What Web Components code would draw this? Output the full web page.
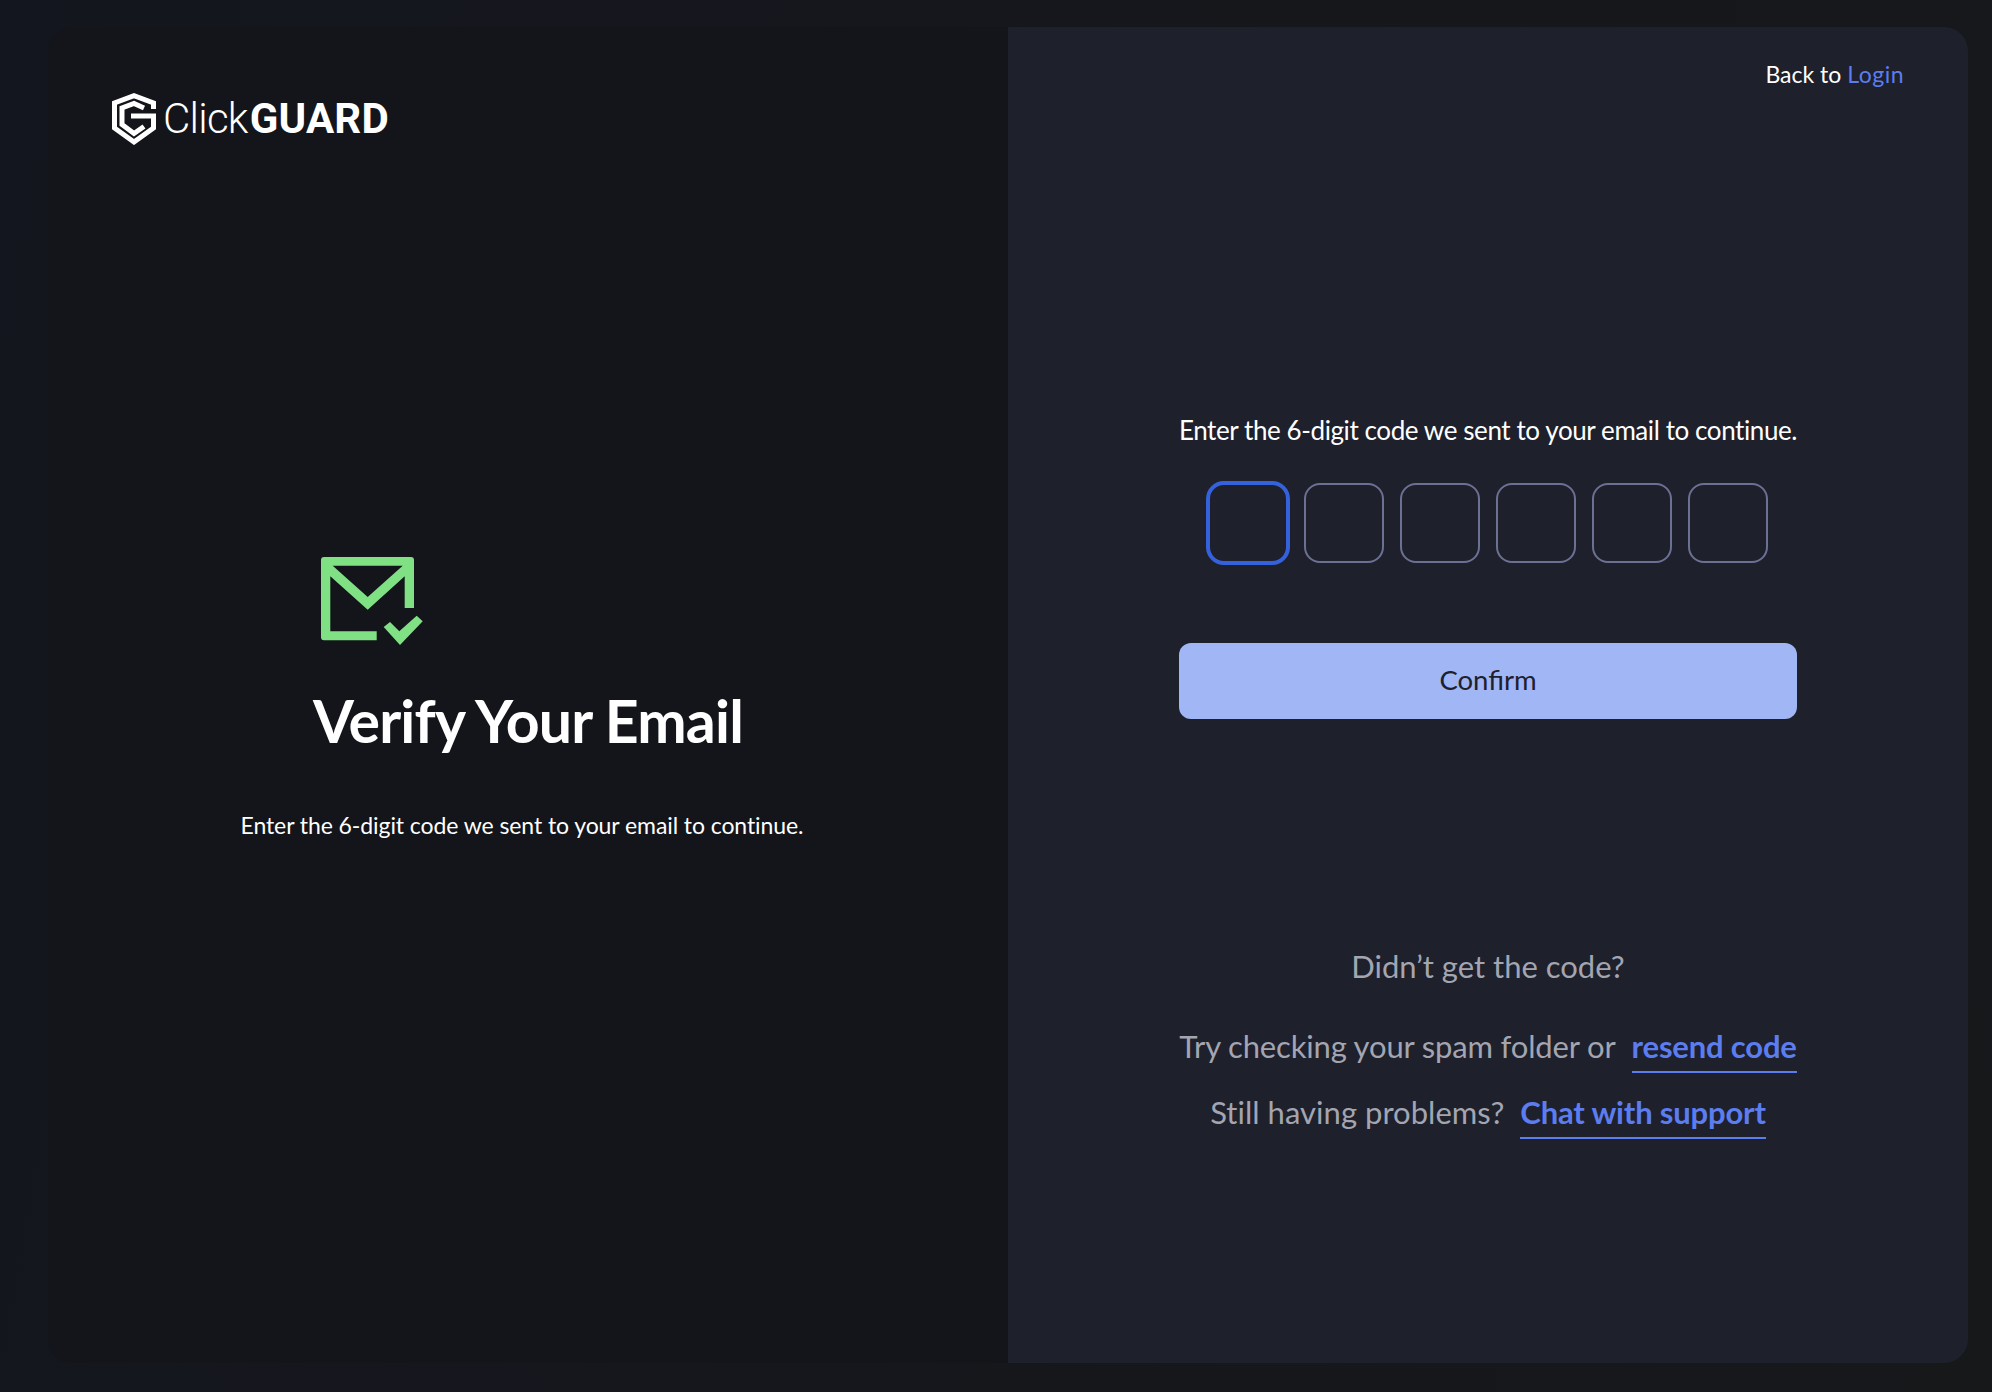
<!DOCTYPE html>
<html lang="en"><head><meta charset="utf-8"><title>Verify Your Email</title>
<style>
html,body{margin:0;height:100%}
body{background:linear-gradient(100deg,#14161f 0%,#16171c 50%,#17181a 100%);font-family:Lato,"Open Sans",sans-serif;}
</style></head><body>
<verify-page>
  <brand-panel></brand-panel>
  <code-panel></code-panel>
</verify-page>
<script>
function def(name,html){customElements.define(name,class extends HTMLElement{constructor(){super();this.attachShadow({mode:'open'}).innerHTML=html;}});}
def('verify-page',`<style>
:host{display:block;box-sizing:border-box;height:1392px;padding:27px 24px 29px 48px}
.card{display:grid;grid-template-columns:960px 960px;height:100%;border-radius:24px;overflow:hidden}
</style><div class="card"><slot></slot></div>`);
def('cg-logo',`<style>
:host{display:flex;align-items:center;gap:7px;color:#fff;height:52px}
svg{width:44px;height:52px;flex:none}
.w{font:300 42px/52px Roboto,sans-serif;white-space:nowrap}
i{font-style:normal;letter-spacing:-.75px}
b{font-weight:700;margin-left:2px;letter-spacing:.2px}
</style><svg viewBox="0 0 44 52" aria-hidden="true" fill="none" stroke="#fff" stroke-width="5" stroke-linejoin="miter">
<path d="M41.500 16V10L22 2.700 2.500 10V35L22 49 41.500 35V23H19"/>
<path d="M32 15 22 10.500 10 15V31.500L22 40.500 32 33.500"/>
</svg><span class="w"><i>Click</i><b>GUARD</b></span>`);
def('mail-check',`<style>:host{display:block;width:102px;height:88px}svg{display:block}</style>
<svg width="102" height="88" viewBox="0 0 102 88" aria-hidden="true" fill="#7fe184">
<path fill-rule="evenodd" d="M3 0H90a3 3 0 0 1 3 3V51H83.700V19.300L46.700 52.700 9.300 19.300V74.300H55.700V83.300H3a3 3 0 0 1-3-3V3a3 3 0 0 1 3-3ZM11.700 8.700 46.700 40 81.700 8.700Z"/>
<path d="M62.700 70 69 65 78.300 74.300 95.700 58.700 101.700 64.300 79 88Z"/>
</svg>`);
def('brand-panel',`<style>
:host{display:flex;flex-direction:column;background:#13151a;color:#fff;padding:66px 0 0 64px;box-sizing:border-box;min-width:0}
.c{display:flex;flex-direction:column;margin-top:412px;margin-left:-64px;width:960px;align-items:center}
mail-check{align-self:flex-start;margin-left:273px}
h1{margin:40px 0 0;font:700 59px/72px Lato,sans-serif;letter-spacing:-.8px}
p{margin:52px 0 0;font:400 23px/32px Lato,sans-serif;letter-spacing:-.08px;margin-right:12px}
</style><cg-logo></cg-logo><div class="c"><mail-check></mail-check><h1>Verify Your Email</h1><p>Enter the 6-digit code we sent to your email to continue.</p></div>`);
def('code-box',`<style>
:host{display:block;box-sizing:border-box;width:80px;height:80px;border:2px solid #6c7093;border-radius:16px}
:host([active]){width:84px;height:84px;margin:-2px -2px;border:4px solid #3562dc;border-radius:18px}
</style>`);
def('text-link',`<style>
:host{display:inline-block;color:#5c7df0;font-weight:700;letter-spacing:-.18px;border-bottom:2px solid #5c7df0;padding-bottom:7px;line-height:36px}
</style><slot></slot>`);
def('code-panel',`<style>
:host{display:flex;flex-direction:column;align-items:center;background:#1e202c;color:#fff;position:relative;box-sizing:border-box;padding-top:384px}
.top{position:absolute;top:29px;right:64px;font:400 23px/36px Lato,sans-serif}
.top a{color:#5c7df0;text-decoration:none;letter-spacing:.5px}
.lead{font:400 26px/38px Lato,sans-serif;letter-spacing:-.41px;white-space:nowrap}
.boxes{display:flex;gap:16px;margin-top:34px;align-items:center}
button{display:block;width:618px;height:76px;margin-top:80px;padding:0 0 2px;background:#a1b6f5;color:#1e202c;border:0;border-radius:12px;font:400 27.500px/36px Lato,sans-serif}
.help{margin-top:227px;color:#a3a5b1;font:400 31px/40px Lato,sans-serif;text-align:center;display:flex;flex-direction:column;align-items:center}
.l1{margin-bottom:40px}
.row{display:flex;gap:16px;align-items:baseline;height:66px;white-space:nowrap}
.r1 span{letter-spacing:-.16px}
.r2 span{letter-spacing:.03px}
</style>
<div class="top">Back to <a href="#">Login</a></div>
<div class="lead">Enter the 6-digit code we sent to your email to continue.</div>
<div class="boxes"><code-box active></code-box><code-box></code-box><code-box></code-box><code-box></code-box><code-box></code-box><code-box></code-box></div>
<button>Confirm</button>
<div class="help"><div class="l1">Didn’t get the code?</div>
<div class="row r1"><span>Try checking your spam folder or</span><text-link>resend code</text-link></div>
<div class="row r2"><span>Still having problems?</span><text-link>Chat with support</text-link></div></div>`);
</script></body></html>
